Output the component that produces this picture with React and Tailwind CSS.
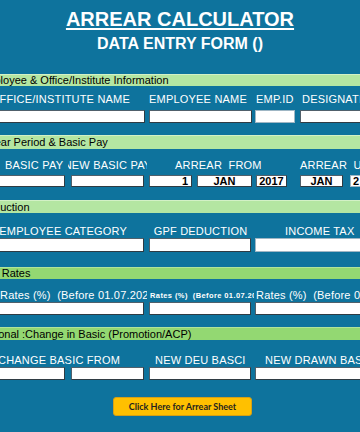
import React from "react";

const Bar = ({ text, cls, light = true, offset }) => (
  <div
    className={`w-full overflow-hidden whitespace-nowrap text-[11px] text-black shrink-0 ${
      light ? "bg-[#b4e6a2] border-t border-[#d3f1c6]" : "bg-[#93d872] border-t border-[#b0e49a]"
    } ${cls}`}
  >
    <span className={`inline-block ${offset}`}>{text}</span>
  </div>
);

const L = ({ w, align = "start", pad = "", children, small = false }) => {
  const j = align === "end" ? "justify-end" : align === "center" ? "justify-center" : "justify-start";
  return (
    <div className={`flex ${j} overflow-hidden shrink-0 ${w}`}>
      <span
        className={`whitespace-pre shrink-0 ${pad} ${
          small ? "text-[7.5px] font-bold tracking-[0.4px]" : "text-[11px] tracking-[0.2px]"
        }`}
      >
        {children}
      </span>
    </div>
  );
};

const LabelRow = ({ mt, children }) => (
  <div className={`flex h-[13px] leading-[13px] text-white shrink-0 ${mt}`}>{children}</div>
);

const Box = ({ cls, children, align = "center", lightBorder = false }) => (
  <div
    className={`shrink-0 h-full bg-white text-black font-bold text-[11px] flex items-center overflow-hidden whitespace-nowrap ${
      align === "end" ? "justify-end pr-[3px]" : align === "start" ? "justify-start pl-[2px]" : "justify-center"
    } ${lightBorder ? "border border-[#9fb6c4]" : "border border-[#50606b] border-b-[#2f3b43] border-r-[#2f3b43]"} ${cls}`}
  >
    {children}
  </div>
);

const BoxRow = ({ cls, children }) => <div className={`flex shrink-0 ${cls}`}>{children}</div>;

export default function App() {
  return (
    <div className="w-[360px] h-[432px] overflow-hidden bg-[#0e739d] font-['Liberation_Sans',Arial,sans-serif] flex flex-col">
      <div className="h-[74px] flex flex-col items-center shrink-0">
        <div className="mt-[8px] text-[20px] leading-[23px] font-bold text-white underline decoration-[1.5px] underline-offset-[2px]">
          ARREAR CALCULATOR
        </div>
        <div className="mt-[4px] text-[16px] leading-[18px] font-bold text-white">DATA ENTRY FORM ()</div>
      </div>

      <Bar text="Employee & Office/Institute Information" cls="h-[12px] leading-[11px]" offset="-ml-[22px]" />
      <LabelRow mt="mt-[7px]">
        <L w="w-[147px]" align="end" pad="pr-[17px]">OFFICE/INSTITUTE NAME</L>
        <L w="w-[107px]" pad="pl-[2px]">EMPLOYEE NAME</L>
        <L w="w-[44px]" pad="pl-[2px]">EMP.ID</L>
        <L w="w-[100px]" pad="pl-[4px]">DESIGNATION</L>
      </LabelRow>
      <BoxRow cls="mt-[4px] h-[13px]">
        <Box cls="w-[147px] -ml-[2px]" />
        <Box cls="w-[103px] ml-[4px]" />
        <Box cls="w-[40px] ml-[3px]" lightBorder />
        <Box cls="w-[70px] ml-[5px]" />
      </BoxRow>

      <Bar text="Arrear Period & Basic Pay" cls="h-[14px] leading-[13px] mt-[12px]" offset="-ml-[20px]" />
      <LabelRow mt="mt-[10px]">
        <L w="w-[68px]" pad="pl-[5px]">BASIC PAY</L>
        <L w="w-[79px]" align="center">NEW BASIC PAY</L>
        <L w="w-[151px]" pad="pl-[28px]">ARREAR  FROM</L>
        <L w="w-[100px]" pad="pl-[2px]">ARREAR  UPTO</L>
      </LabelRow>
      <BoxRow cls="mt-[3px] h-[12px]">
        <Box cls="w-[67px] -ml-[2px]" />
        <Box cls="w-[73px] ml-[6px]" />
        <Box cls="w-[43px] ml-[5px]" align="end">1</Box>
        <Box cls="w-[55px] ml-[5px]">JAN</Box>
        <Box cls="w-[31px] ml-[4px]">2017</Box>
        <Box cls="w-[43px] ml-[13px]">JAN</Box>
        <Box cls="w-[30px] ml-[7px]" align="start" lightBorder>2</Box>
      </BoxRow>

      <Bar text="Deduction" cls="h-[13px] leading-[12px] mt-[13px]" offset="-ml-[20px]" />
      <LabelRow mt="mt-[12px]">
        <L w="w-[147px]" align="end" pad="pr-[20px]">EMPLOYEE CATEGORY</L>
        <L w="w-[107px]" align="center">GPF DEDUCTION</L>
        <L w="w-[110px]" pad="pl-[31px]">INCOME TAX</L>
      </LabelRow>
      <BoxRow cls="h-[14px]">
        <Box cls="w-[146px] -ml-[2px]" />
        <Box cls="w-[102px] ml-[5px]" />
        <Box cls="w-[115px] ml-[4px]" lightBorder />
      </BoxRow>

      <Bar text="DA Rates" cls="h-[12px] leading-[11px] mt-[15px]" light={false} offset="-ml-[16px]" />
      <LabelRow mt="mt-[10px]">
        <L w="w-[147px]">Rates (%)  (Before 01.07.2021)</L>
        <L w="w-[107px]" pad="pl-[3px]" small>Rates (%)  (Before 01.07.2021)</L>
        <L w="w-[110px]" pad="pl-[2px]">Rates (%)  (Before 01.07.2021)</L>
      </LabelRow>
      <BoxRow cls="h-[13px]">
        <Box cls="w-[146px] -ml-[2px]" />
        <Box cls="w-[102px] ml-[5px]" />
        <Box cls="w-[115px] ml-[4px]" />
      </BoxRow>

      <Bar text="Optional :Change in Basic (Promotion/ACP)" cls="h-[13px] leading-[12px] mt-[12px]" light={false} offset="-ml-[22px]" />
      <LabelRow mt="mt-[14px]">
        <L w="w-[147px]" align="end" pad="pr-[27px]">CHANGE BASIC FROM</L>
        <L w="w-[107px]" pad="pl-[8px]">NEW DEU BASCI</L>
        <L w="w-[110px]" pad="pl-[11px]">NEW DRAWN BASIC</L>
      </LabelRow>
      <BoxRow cls="h-[13px]">
        <Box cls="w-[67px] -ml-[2px]" />
        <Box cls="w-[73px] ml-[6px]" />
        <Box cls="w-[102px] ml-[5px]" />
        <Box cls="w-[115px] ml-[4px]" />
      </BoxRow>

      <div className="flex shrink-0 mt-[17px]">
        <button className="ml-[113px] w-[139px] h-[19px] rounded-[3px] bg-[#ffc000] border border-[#d4a017] text-[9px] font-bold text-[#1f1f1f] font-['Lato',sans-serif] leading-none">
          Click Here for Arrear Sheet
        </button>
      </div>
    </div>
  );
}
